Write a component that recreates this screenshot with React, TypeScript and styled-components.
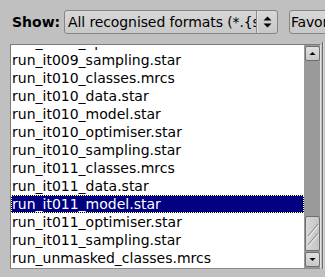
import React from "react";
import styled, { createGlobalStyle } from "styled-components";

const Global = createGlobalStyle`
  html, body { margin: 0; padding: 0; background: #c0c0c0; }
  body { font-family: "DejaVu Sans", "Liberation Sans", sans-serif; font-size: 14px; color: #000; }
`;

const Window = styled.div`
  width: 325px;
  height: 277px;
  overflow: hidden;
  background: #c0c0c0;
  display: flex;
  flex-direction: column;
`;

const Toolbar = styled.div`
  display: flex;
  align-items: center;
  height: 24px;
  margin-top: 10px;
  padding-left: 12px;
  white-space: nowrap;
`;

const Label = styled.span`
  flex: 0 0 52px;
  font-weight: bold;
  font-size: 14px;
  line-height: 24px;
`;

const Choice = styled.div`
  flex: 0 0 214px;
  height: 24px;
  box-sizing: border-box;
  display: flex;
  align-items: stretch;
  border: 1px solid #858585;
  border-radius: 3px;
  background: linear-gradient(#d8d8d8, #c8c8c8);
  overflow: hidden;
`;

const ChoiceText = styled.div`
  flex: 1;
  overflow: hidden;
  padding-left: 3px;
  letter-spacing: -0.1px;
  line-height: 22px;
  border-right: 1px solid #8a8a8a;
  box-shadow: 1px 0 0 #e4e4e4;
`;

const ChoiceArrow = styled.div`
  flex: 0 0 20px;
  display: flex;
  align-items: center;
  justify-content: center;
`;

const Button = styled.div`
  flex: 0 0 80px;
  margin-left: 11px;
  height: 24px;
  box-sizing: border-box;
  border: 1px solid #858585;
  border-radius: 3px;
  background: linear-gradient(#d8d8d8, #c8c8c8);
  padding-left: 1px;
  letter-spacing: -0.2px;
  line-height: 22px;
`;

const Body = styled.div`
  display: flex;
  margin-top: 10px;
  margin-left: 10px;
  height: 225px;
`;

const ListBox = styled.div`
  flex: 0 0 311px;
  box-sizing: border-box;
  border: 1px solid #7c7c7c;
  border-right-color: #e2e2e2;
  border-bottom-color: #8c8c8c;
  background: #fff;
  display: flex;
  overflow: hidden;
`;

const Rows = styled.div`
  flex: 1;
  padding-top: 2px;
  display: flex;
  flex-direction: column;
`;

const Clip = styled.div`
  flex: 1;
  overflow: hidden;
  display: flex;
  flex-direction: column;
`;

const RowStack = styled.div`
  margin-top: -14px;
  display: flex;
  flex-direction: column;
`;

const Row = styled.div<{ $selected?: boolean }>`
  height: 18px;
  flex: 0 0 18px;
  box-sizing: border-box;
  line-height: 16px;
  white-space: nowrap;
  border: 1px ${(p) => (p.$selected ? "dotted #fff" : "solid transparent")};
  color: ${(p) => (p.$selected ? "#fff" : "#000")};
  background: ${(p) =>
    p.$selected
      ? "linear-gradient(#000080, #000080) padding-box, #000 border-box"
      : "transparent"};
`;

const Scrollbar = styled.div`
  flex: 0 0 16px;
  background: #9a9a9a;
  display: flex;
  flex-direction: column;
  padding: 1px 0 1px 1px;
  box-sizing: border-box;
`;

const ScrollButton = styled.div`
  height: 15px;
  box-sizing: border-box;
  border: 1px solid #6e6e6e;
  border-radius: 2px;
  background: linear-gradient(#e0e0e0, #c8c8c8);
  display: flex;
  align-items: center;
  justify-content: center;
`;

const Track = styled.div`
  flex: 1;
  display: flex;
  flex-direction: column;
  justify-content: flex-end;
  padding-bottom: 1px;
`;

const Thumb = styled.div`
  height: 35px;
  box-sizing: border-box;
  border: 1px solid #6e6e6e;
  border-radius: 2px;
  background: linear-gradient(90deg, #d8d8d8, #c4c4c4);
  display: flex;
  align-items: center;
  justify-content: center;
`;

const SidePane = styled.div`
  flex: 1;
  margin-left: 1px;
  margin-top: -2px;
  border-left: 1px solid #6a6a6a;
  box-shadow: inset 1px 0 0 #dadada;
`;

const files = [
  "run_it009_optimiser.star",
  "run_it009_sampling.star",
  "run_it010_classes.mrcs",
  "run_it010_data.star",
  "run_it010_model.star",
  "run_it010_optimiser.star",
  "run_it010_sampling.star",
  "run_it011_classes.mrcs",
  "run_it011_data.star",
  "run_it011_model.star",
  "run_it011_optimiser.star",
  "run_it011_sampling.star",
  "run_unmasked_classes.mrcs",
];

const UpDown = () => (
  <svg width="9" height="14" viewBox="0 0 9 14">
    <path d="M0.5 5.5 L4.5 1.5 L8.5 5.5 Z" fill="#000" />
    <path d="M0.5 8.5 L4.5 12.5 L8.5 8.5 Z" fill="#000" />
  </svg>
);

const Arrow = ({ down }: { down?: boolean }) => (
  <svg width="7" height="5" viewBox="0 0 7 5">
    {down ? (
      <path d="M0.5 1 L6.5 1 L3.5 4 Z" fill="#000" />
    ) : (
      <path d="M0.5 4 L6.5 4 L3.5 1 Z" fill="#000" />
    )}
  </svg>
);

const Grip = () => (
  <svg width="12" height="30" viewBox="0 0 12 30">
    <path d="M1 17 L11 5" stroke="#8a8a8a" strokeWidth="1" />
    <path d="M2 18 L12 6" stroke="#f0f0f0" strokeWidth="1" />
    <path d="M1 26 L11 14" stroke="#8a8a8a" strokeWidth="1" />
    <path d="M2 27 L12 15" stroke="#f0f0f0" strokeWidth="1" />
  </svg>
);

export default function App() {
  return (
    <>
      <Global />
      <Window>
        <Toolbar>
          <Label>Show:</Label>
          <Choice>
            <ChoiceText>All recognised formats (*.{"{"}star,mrcs,mrc{"}"})</ChoiceText>
            <ChoiceArrow>
              <UpDown />
            </ChoiceArrow>
          </Choice>
          <Button>Favorites</Button>
        </Toolbar>
        <Body>
          <ListBox>
            <Rows>
              <Clip>
                <RowStack>
                  {files.map((f) => (
                    <Row key={f} $selected={f === "run_it011_model.star"}>
                      {f}
                    </Row>
                  ))}
                </RowStack>
              </Clip>
            </Rows>
            <Scrollbar>
              <ScrollButton>
                <Arrow />
              </ScrollButton>
              <Track>
                <Thumb>
                  <Grip />
                </Thumb>
              </Track>
              <ScrollButton>
                <Arrow down />
              </ScrollButton>
            </Scrollbar>
          </ListBox>
          <SidePane />
        </Body>
      </Window>
    </>
  );
}
